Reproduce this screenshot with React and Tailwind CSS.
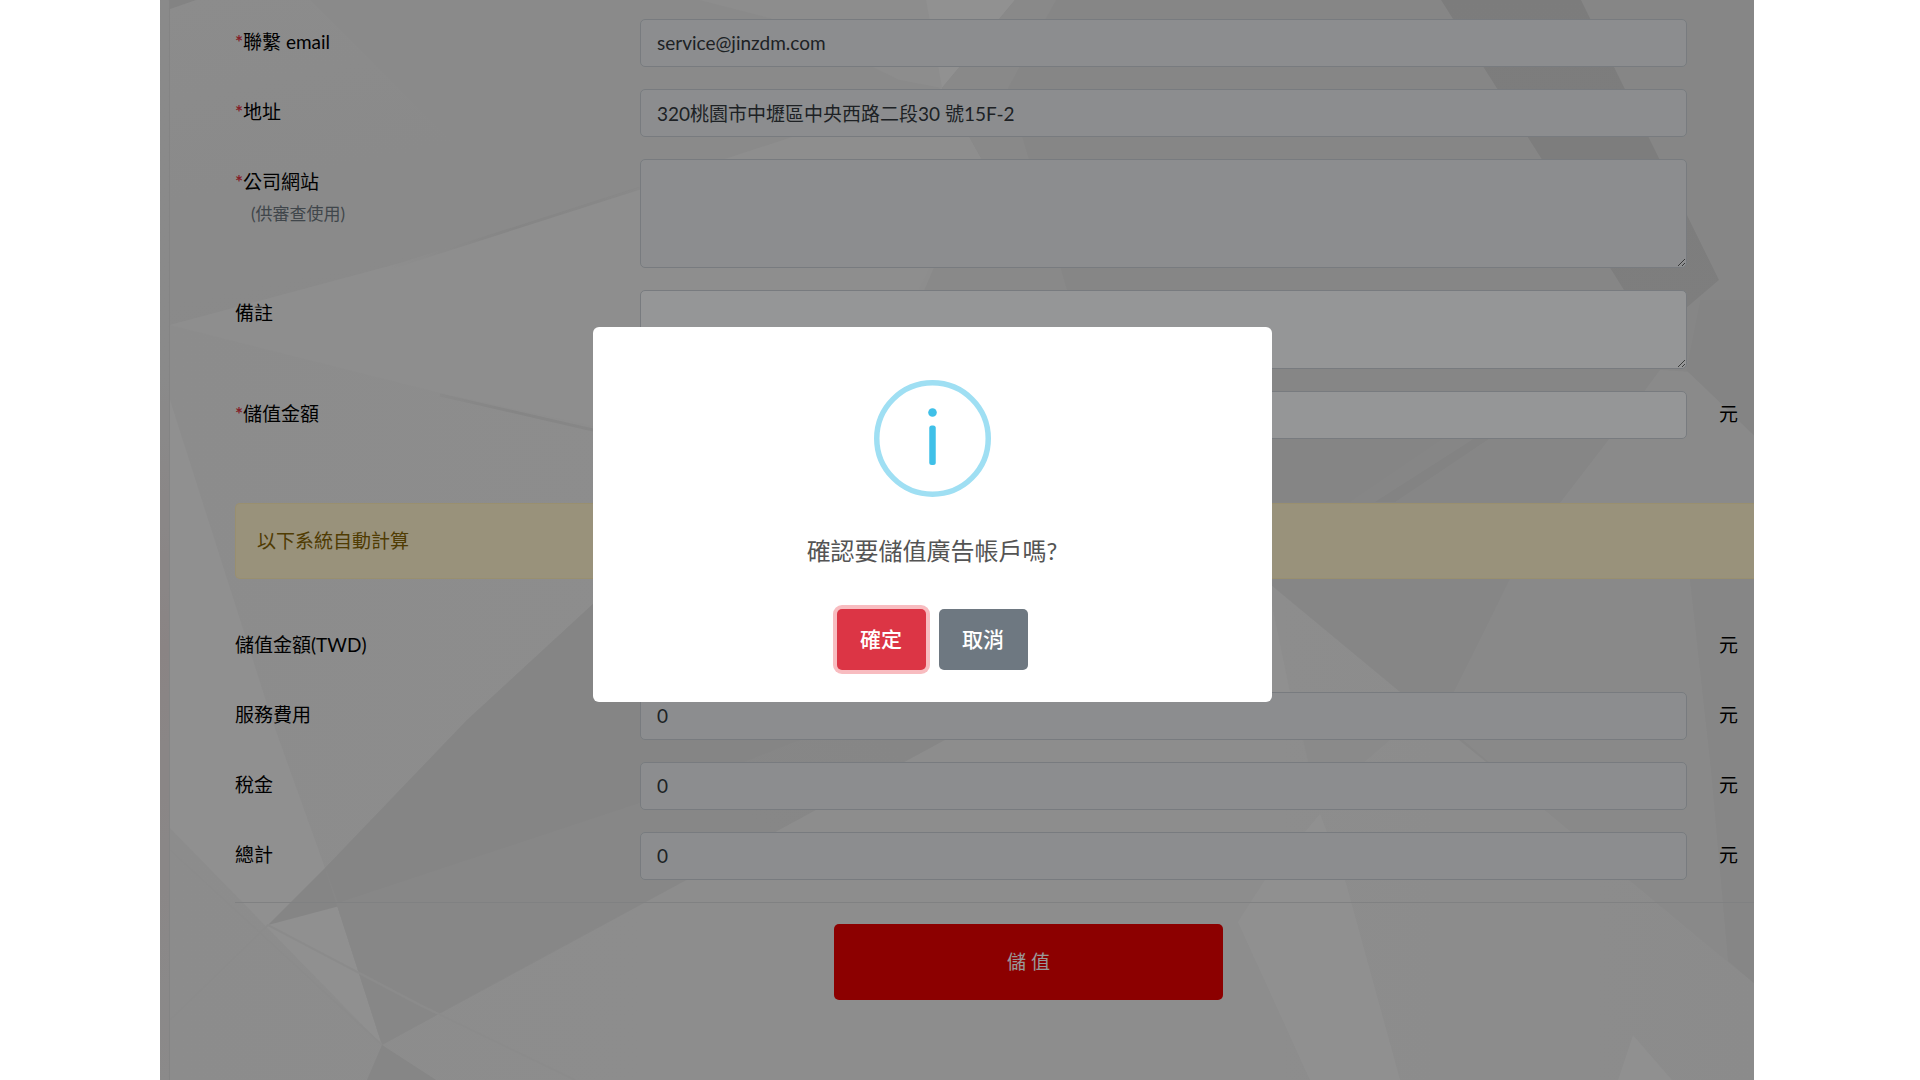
const control =
  'block w-full rounded-[5px] border border-[#c8ced4] px-4 text-[19px] leading-7 text-[#33383d] outline-none';

function Backdrop() {
  return (
    <svg
      className="absolute inset-0 h-full w-full"
      viewBox="170 0 1584 1080"
      preserveAspectRatio="none"
      aria-hidden="true"
    >
      <defs>
        <linearGradient id="base" x1="0" y1="0" x2="1" y2="0">
          <stop offset="0" stopColor="#eaeaea" />
          <stop offset="0.6" stopColor="#ececec" />
          <stop offset="1" stopColor="#e8e8e8" />
        </linearGradient>
        <linearGradient id="upper" x1="0" y1="0" x2="0.5" y2="1">
          <stop offset="0" stopColor="#e9e9e9" />
          <stop offset="1" stopColor="#e5e5e5" />
        </linearGradient>
        <linearGradient id="band" x1="0" y1="0" x2="0" y2="1">
          <stop offset="0" stopColor="#cfcfcf" />
          <stop offset="1" stopColor="#d2d2d2" />
        </linearGradient>
        <linearGradient id="shade" x1="0" y1="1" x2="1" y2="0">
          <stop offset="0" stopColor="#e4e4e4" />
          <stop offset="1" stopColor="#dfdfdf" />
        </linearGradient>
        <linearGradient id="seam" x1="0" y1="0" x2="1" y2="0">
          <stop offset="0" stopColor="#dedede" stopOpacity="0" />
          <stop offset="0.5" stopColor="#dedede" />
          <stop offset="1" stopColor="#dedede" stopOpacity="0.6" />
        </linearGradient>
      </defs>
      <rect x="170" width="1584" height="1080" fill="url(#base)" />
      <polygon points="170,0 942,0 942,88 640,187 400,265 170,325" fill="url(#upper)" />
      <polygon points="170,0 196,0 170,9" fill="#dadada" />
      <polygon points="310,0 740,0 942,88 640,187 590,280" fill="#e7e7e7" />
      <polygon points="640,0 700,0 770,18 900,80 942,88 926,0" fill="#ebebeb" />
      <polygon points="926,0 1015,0 942,88" fill="#f2f2f2" />
      <polygon points="170,325 400,263 640,187 942,88 981,158 900,330 593,426 440,393" fill="#ededed" />
      <polygon points="942,88 1015,0 1754,0 1754,579 1271,579 1100,400 981,158" fill="#e0e0e0" />
      <polygon points="942,88 1015,0 1056,0 1008,88 1067,290 920,300 981,158" fill="#e4e4e4" />
      <path d="M390 268L640 188M440 395L593 430" stroke="url(#seam)" strokeWidth="3" />
      <polygon points="1441,0 1581,0 1719,280 1686,308 1624,290 1541,158" fill="url(#band)" />
      <polygon points="1271,502 1271,400 1500,400 1350,502" fill="#dedede" />
      <polygon points="1475,438 1490,438 1395,502 1375,502" fill="#dadada" />
      <polygon points="1610,438 1660,370 1690,372 1754,436 1754,503 1560,503" fill="#e7e7e7" />
      <polygon points="1686,370 1754,435 1754,300 1700,300" fill="#dddddd" />
      <polygon points="170,400 170,828 382,1045 325,868 272,720" fill="#f0f0f0" />
      <polygon points="325,868 467,720 593,604 945,604 945,740 382,1045" fill="url(#shade)" />
      <polygon points="268,925 325,868 467,720 593,604 800,604 800,740 640,803 400,890" fill="#dedede" />
      <polygon points="325,868 382,1045 640,903 683,880 640,803 338,903" fill="#e2e2e2" />
      <path d="M170 850L382 1045M170 1020L268 925L420 1005L575 1080" stroke="#e8e8e8" strokeWidth="2" fill="none" />
      <polygon points="382,1045 367,1080 436,1080" fill="#dfdfdf" />
      <polygon points="1271,585 1400,692 1545,810 1754,983 1754,579 1271,579" fill="#e0e0e0" />
      <polygon points="1510,579 1470,660 1440,720 1545,810 1740,972 1710,760 1690,579" fill="#e5e5e5" />
      <polygon points="1690,579 1710,760 1728,961 1754,983 1754,579" fill="#e0e0e0" />
      <polygon points="1271,600 1290,692 1271,692" fill="#f0f0f0" />
      <polygon points="1303,740 1390,740 1355,770 1310,770" fill="#e7e7e7" />
      <polygon points="1320,814 1345,880 1400,1080 1310,1080 1238,922 1265,880" fill="#f1f1f1" />
      <polygon points="1633,1035 1672,1080 1618,1080" fill="#f0f0f0" />
    </svg>
  );
}

function Row({ id, label, required, hint, unit, children }) {
  return (
    <div className="flex">
      <div className="w-[405px] shrink-0 pt-[9px] text-[19px] leading-7 text-black">
        <label htmlFor={id} className="block">
          {required && <span className="font-bold text-[#dc3545]">*</span>}
          {label}
        </label>
        {hint && <small className="mt-1 ml-4 block text-[17px] leading-7 text-[#6c757d]">{hint}</small>}
      </div>
      <div className="min-w-0 flex-1">{children}</div>
      <div className="w-[67px] shrink-0 pt-[9px] pl-8 text-[19px] leading-7 text-black">{unit}</div>
    </div>
  );
}

function Total({ id, label }) {
  return (
    <Row id={id} label={label} unit="元">
      <input id={id} type="text" readOnly defaultValue="0" className={control + ' h-12 bg-[#e9ecef] pb-0.5'} />
    </Row>
  );
}

function ConfirmDialog() {
  return (
    <div className="absolute inset-0 z-10 flex items-center justify-center bg-black/40 pr-[50px] pb-[51px]">
      <div
        role="dialog"
        aria-modal="true"
        aria-labelledby="confirm-text"
        className="flex w-full max-w-[679px] flex-col items-center rounded-[6px] bg-white pt-[53px] pb-8"
      >
        <svg className="h-[117px] w-[117px]" viewBox="0 0 117 117" aria-hidden="true">
          <circle cx="58.5" cy="58.5" r="55.75" fill="none" stroke="#9fdff3" strokeWidth="5.5" />
          <circle cx="58.5" cy="32.5" r="4.3" fill="#3fc0e8" />
          <rect x="55.25" y="45.5" width="6.5" height="39.5" rx="2.5" fill="#3fc0e8" />
        </svg>
        <p id="confirm-text" className="mt-9 text-[24px] leading-9 text-[#545454]">
          確認要儲值廣告帳戶嗎?
        </p>
        <div className="mt-10 flex gap-[13px]">
          <button
            type="button"
            className="h-[61px] w-[89px] rounded-[5px] bg-[#dc3545] pb-0.5 text-[21px] font-medium text-white ring-4 ring-[#f8bcc0]"
          >
            確定
          </button>
          <button
            type="button"
            className="h-[61px] w-[89px] rounded-[5px] bg-[#6e7881] pb-0.5 text-[21px] font-medium text-white"
          >
            取消
          </button>
        </div>
      </div>
    </div>
  );
}

export default function App() {
  return (
    <div className="min-h-screen bg-white pr-[166px] pl-40 font-[Lato,'Noto_Sans_CJK_TC',sans-serif]">
      <div className="relative flex min-h-screen">
        <div className="w-2.5 shrink-0 bg-linear-to-b from-[#e6e6e6] from-35% via-[#e6dddd] via-60% to-[#e8e6e6] shadow-[inset_-1px_0_0_#dcdcdc]" />
        <main className="relative min-w-0 flex-1">
          <Backdrop />
          <form className="relative pt-[19px] pl-[65px]">
            <div className="flex flex-col gap-[22px]">
              <Row id="email" label="聯繫 email" required>
                <input
                  id="email"
                  type="email"
                  readOnly
                  defaultValue="service@jinzdm.com"
                  className={control + ' h-12 bg-[#e9ecef] pb-0.5'}
                />
              </Row>
              <Row id="address" label="地址" required>
                <input
                  id="address"
                  type="text"
                  readOnly
                  defaultValue="320桃園市中壢區中央西路二段30 號15F-2"
                  className={control + ' h-12 bg-[#e9ecef] pb-0.5'}
                />
              </Row>
              <Row id="website" label="公司網站" required hint="(供審查使用)">
                <textarea id="website" readOnly className={control + ' h-[109px] bg-[#e9ecef]'} />
              </Row>
              <Row id="note" label="備註">
                <textarea id="note" className={control + ' h-[79px] bg-[#f8fafc]'} />
              </Row>
              <Row id="amount" label="儲值金額" required unit="元">
                <input id="amount" type="text" className={control + ' h-12 bg-[#f8fafc]'} />
              </Row>
            </div>
            <div className="mt-16 rounded-l-[5px] border border-r-0 border-[#ffeeba] bg-[#fff3cd] px-[21px] py-[23px] text-[19px] leading-7 text-[#856404]">
              以下系統自動計算
            </div>
            <div className="mt-[43px] flex flex-col gap-[22px]">
              <Row id="amount-twd" label="儲值金額(TWD)" unit="元">
                <output id="amount-twd" className="block h-12" />
              </Row>
              <Total id="service-fee" label="服務費用" />
              <Total id="tax" label="稅金" />
              <Total id="total" label="總計" />
            </div>
            <hr className="mt-[22px] border-t border-[#d6d8d9]" />
            <div className="mt-[21px] flex justify-center pl-[68px]">
              <button type="button" className="h-[76px] w-[389px] rounded-[5px] bg-[#e90000] text-[19px] text-white">
                儲 值
              </button>
            </div>
          </form>
        </main>
        <ConfirmDialog />
      </div>
    </div>
  );
}
